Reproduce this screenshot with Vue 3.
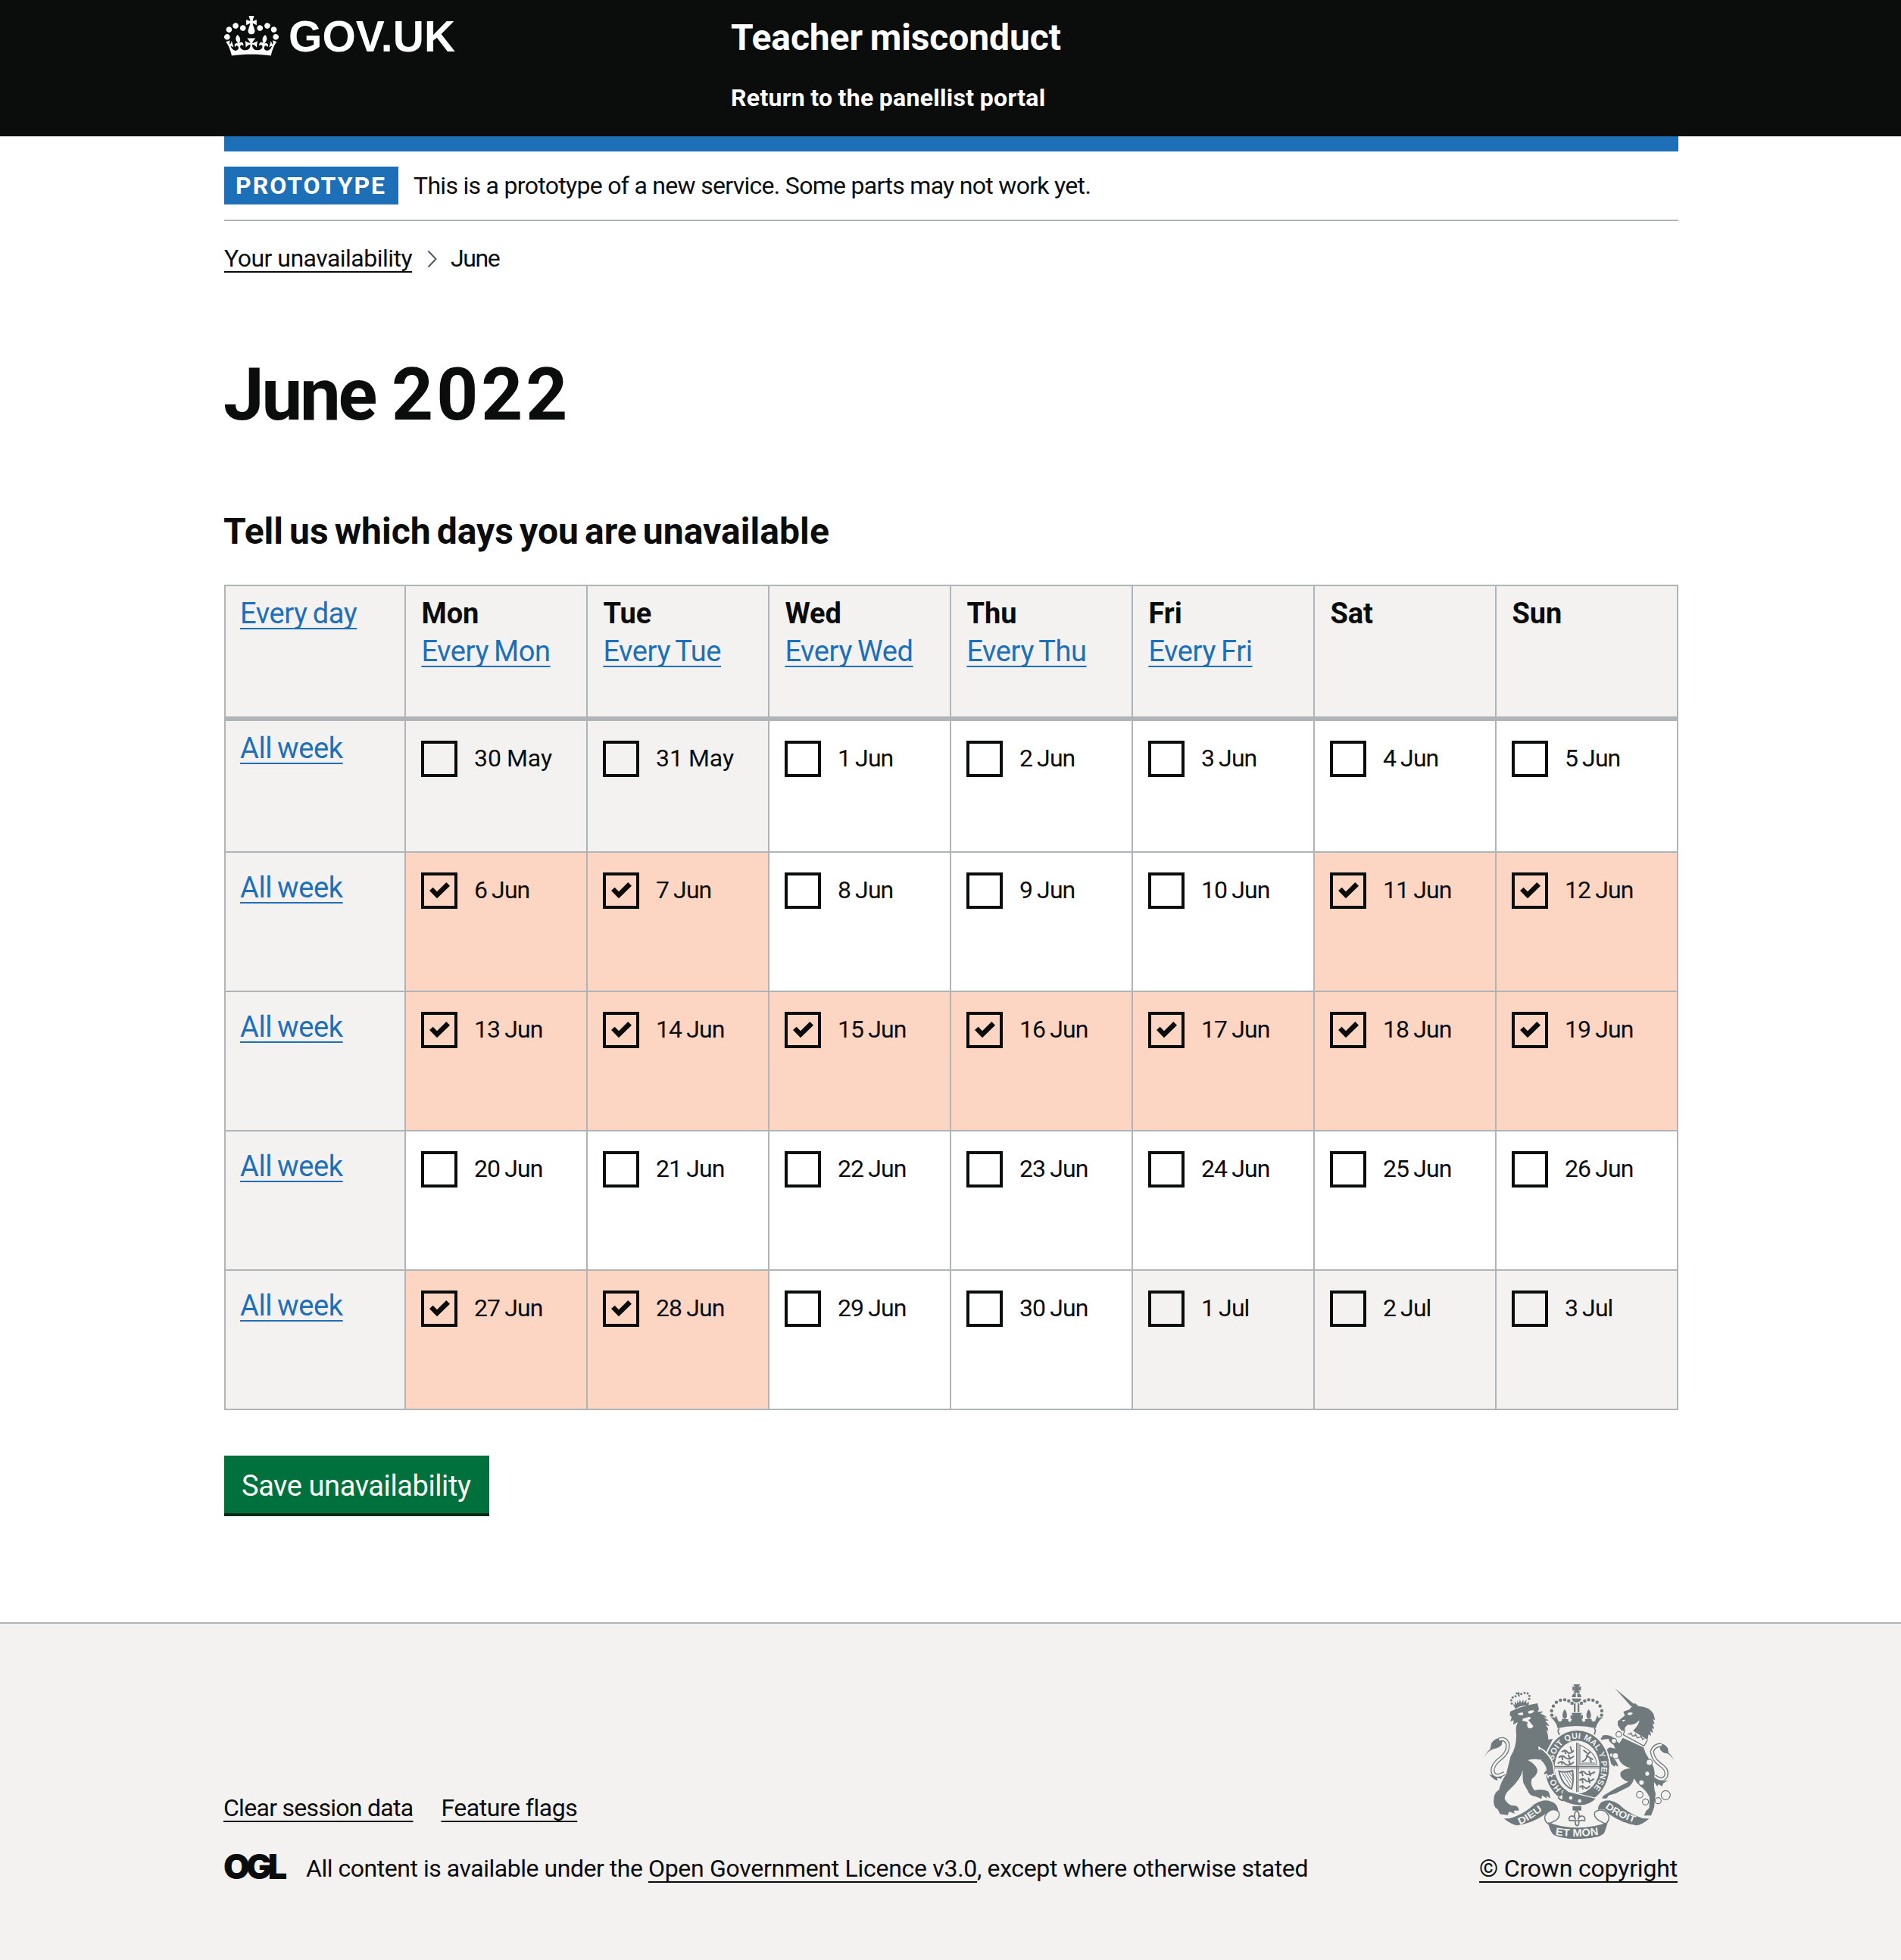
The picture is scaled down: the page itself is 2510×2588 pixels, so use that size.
<script setup>
const days = ['Mon', 'Tue', 'Wed', 'Thu', 'Fri', 'Sat', 'Sun']

const unavailable = new Set(['6 Jun', '7 Jun', '11 Jun', '12 Jun', '13 Jun', '14 Jun', '15 Jun', '16 Jun', '17 Jun', '18 Jun', '19 Jun', '27 Jun', '28 Jun'])

// Five Monday-to-Sunday weeks starting on 30 May 2022
const weeks = Array.from({ length: 5 }, (_, w) =>
  Array.from({ length: 7 }, (_, d) => {
    const n = w * 7 + d - 1
    const label = n < 1 ? `${n + 31} May` : n > 30 ? `${n - 30} Jul` : `${n} Jun`
    return { label, outside: n < 1 || n > 30, checked: unavailable.has(label), may: n < 1 }
  })
)

const crownDots = [[327, 194], [326, 177], [333, 158], [345, 143], [361, 135], [378, 133], [394, 138], [407, 147]]
const lionDots = [[168, 148], [166, 135], [172, 124], [183, 119], [206, 110], [219, 106], [231, 108], [238, 118], [237, 130]]
const chain = [[592, 270, 11], [573, 296, 10], [579, 355, 12], [713, 381, 12], [675, 509, 13], [698, 538, 12], [748, 533, 12], [778, 511, 18]]
const crownHalf = 'M322 202l18 2 3-10 7 17q2 9 9 9 9-1 8-12 6 3 11-1-9-2-9-10 0-16 9-26 9 10 9 26 0 8-9 10 8 4 14 2-2 10 6 12 8-2 7-14l-4 2v-16l9 4-5-12h21v52q-40 0-76 9-5-24-28-44z'
</script>

<template>
  <div class="page">
    <header class="header">
      <div class="width header-row">
        <a class="logo">
          <svg class="crown" viewBox="0 0 132 97" fill="currentColor" aria-hidden="true">
            <path fill-rule="evenodd" d="M25 30.2c3.5 1.5 7.7-.2 9.1-3.7 1.5-3.6-.2-7.8-3.9-9.2-3.6-1.4-7.6.3-9.1 3.9-1.4 3.5.3 7.5 3.9 9zM9 39.5c3.6 1.5 7.8-.2 9.2-3.7 1.5-3.6-.2-7.8-3.9-9.1-3.6-1.5-7.6.2-9.1 3.8-1.4 3.5.3 7.5 3.8 9zM4.4 57.2c3.5 1.5 7.7-.2 9.1-3.8 1.5-3.6-.2-7.7-3.9-9.1-3.5-1.5-7.6.3-9.1 3.8-1.4 3.5.3 7.6 3.9 9.1zm38.3-21.4c3.5 1.5 7.7-.2 9.1-3.8 1.5-3.6-.2-7.7-3.9-9.1-3.6-1.5-7.6.3-9.1 3.8-1.3 3.6.4 7.7 3.9 9.1zm64.4-5.6c-3.6 1.5-7.8-.2-9.1-3.7-1.5-3.6.2-7.8 3.8-9.2 3.6-1.4 7.7.3 9.2 3.9 1.3 3.5-.4 7.5-3.9 9zm15.9 9.3c-3.6 1.5-7.7-.2-9.1-3.7-1.5-3.6.2-7.8 3.7-9.1 3.6-1.5 7.7.2 9.2 3.8 1.5 3.5-.3 7.5-3.8 9zm4.7 17.7c-3.6 1.5-7.8-.2-9.2-3.8-1.5-3.6.2-7.7 3.9-9.1 3.6-1.5 7.7.3 9.2 3.8 1.3 3.5-.4 7.6-3.9 9.1zM89.3 35.8c-3.6 1.5-7.8-.2-9.2-3.8-1.4-3.6.2-7.7 3.9-9.1 3.6-1.5 7.7.3 9.2 3.8 1.4 3.6-.3 7.7-3.9 9.1zM69.7 17.7l8.9 4.7V9.3l-8.9 2.8c-.2-.3-.5-.6-.9-.9L72.4 0H59.6l3.5 11.2c-.3.3-.6.5-.9.9l-8.8-2.8v13.1l8.8-4.7c.3.3.6.7.9.9l-5 15.4v.1c-.2.8-.4 1.6-.4 2.4 0 4.1 3.1 7.5 7 8.1h.2c.3 0 .7.1 1 .1.4 0 .7 0 1-.1h.2c4-.6 7.1-4.1 7.1-8.1 0-.8-.1-1.7-.4-2.4V34l-5.1-15.4c.4-.2.7-.6 1-.9zM66 92.8c16.9 0 32.8 1.1 47.1 3.2 4-16.9 8.9-26.7 14-33.5l-9.6-3.4c1 4.9 1.1 7.2 0 10.2-1.5-1.4-3-4.3-4.2-8.7L108.6 76c2.8-2 5-3.2 7.5-3.3-4.4 9.4-10 11.9-13.6 11.2-4.3-.8-6.3-4.6-5.6-7.9 1-4.7 5.7-5.9 8-.5 4.3-8.7-3-11.4-7.6-8.8 7.1-7.2 7.9-13.5 2.1-21.1-8 6.1-8.1 12.3-4.5 20.8-4.7-5.4-12.1-2.5-9.5 6.2 3.4-5.2 7.9-2 7.2 3.1-.6 4.3-6.4 7.8-13.5 7.2-10.3-.9-10.9-8-11.2-13.8 2.5-.5 7.1 1.8 11 7.3L80.2 60c-4.1 4.4-8 5.3-12.3 5.4 1.4-4.4 8-11.6 8-11.6H55.5s6.4 7.2 7.9 11.6c-4.2-.1-8-1-12.3-5.4l1.4 16.4c3.9-5.5 8.5-7.7 10.9-7.3-.3 5.8-.9 12.8-11.1 13.8-7.2.6-12.9-2.9-13.5-7.2-.7-5 3.8-8.3 7.1-3.1 2.7-8.7-4.6-11.6-9.4-6.2 3.7-8.5 3.6-14.7-4.6-20.8-5.8 7.6-5 13.9 2.2 21.1-4.7-2.6-11.9.1-7.7 8.8 2.3-5.5 7.1-4.2 8.1.5.7 3.3-1.3 7.1-5.7 7.9-3.5.7-9-1.8-13.5-11.2 2.5.1 4.7 1.3 7.5 3.3l-4.7-15.4c-1.2 4.4-2.7 7.2-4.3 8.7-1.1-3-.9-5.3 0-10.2l-9.5 3.4c5 6.9 9.9 16.7 14 33.5 14.8-2.1 30.8-3.2 47.7-3.2z" />
          </svg>
          <span class="logo-text">GOV.UK</span>
        </a>
        <div class="service">
          <a class="service-name">Teacher misconduct</a>
          <a class="service-link">Return to the panellist portal</a>
        </div>
      </div>
    </header>

    <div class="width blue-bar"></div>

    <div class="width phase">
      <strong class="tag">PROTOTYPE</strong>
      <span class="phase-text">This is a prototype of a new service. Some parts may not work yet.</span>
    </div>

    <nav class="width crumbs">
      <a class="link crumb-link">Your unavailability</a>
      <svg class="chevron" viewBox="0 0 14 24" fill="none" stroke="#505a5f" stroke-width="2"><path d="M1.5 1.5 11.5 12 1.5 22.5" /></svg>
      <span class="crumb-current">June</span>
    </nav>

    <main class="width">
      <h1><span class="month">June</span> <span class="year">2022</span></h1>
      <h2>Tell us which days you are unavailable</h2>

      <div class="calendar">
        <div class="cell head side"><a class="link day-link">Every day</a></div>
        <div v-for="(day, i) in days" :key="day" class="cell head">
          <b>{{ day }}</b>
          <a v-if="i < 5" class="link day-link">Every {{ day }}</a>
        </div>
        <template v-for="(week, w) in weeks" :key="w">
          <div class="cell side" :class="{ first: w === 0 }"><a class="link week-link">All week</a></div>
          <label
            v-for="d in week"
            :key="d.label"
            class="cell day"
            :class="{ outside: d.outside, checked: d.checked, may: d.may }"
          >
            <span class="box">
              <svg v-if="d.checked" viewBox="0 0 48 48"><path d="M11 24l4.7-4.3 5.3 5.6L33.3 13l4.7 4.7-17 16.6z" fill="#0b0c0c" /></svg>
            </span>
            <span class="date">{{ d.label }}</span>
          </label>
        </template>
      </div>

      <button class="save">Save unavailability</button>
    </main>

    <footer class="footer">
      <div class="width footer-row">
        <div class="footer-left">
          <div class="footer-nav">
            <a class="link clear">Clear session data</a>
            <a class="link flags">Feature flags</a>
          </div>
          <div class="licence">
            <span class="ogl">OGL</span>
            <span class="licence-text"><span class="l1">All content is available under the </span><a class="link l2">Open Government Licence v3.0</a><span class="l3">, except where otherwise stated</span></span>
          </div>
        </div>

        <div class="copyright">
          <svg class="crest" viewBox="60 72 750 612" aria-hidden="true">
            <defs>
              <path id="garter-path" d="M365 487A96 113 0 0 1 331 400A96 113 0 0 1 523 400A96 113 0 0 1 475 498" />
              <path id="scroll-left" d="M200 628Q250 606 302 560" />
              <path id="scroll-mid" d="M341 669Q425 681 518 667" />
              <path id="scroll-right" d="M537 560Q590 602 668 624" />
            </defs>

            <g class="ink">
              <!-- royal crown -->
              <path d="M412 72h27l-7 12 10-5v19l-10-5 7 12h-27l7-12-10 5v-19l10 5z" />
              <path d="M406 123a19 19 0 0 1 16-17v17zM428 106a19 19 0 0 1 16 17h-16zM406 128h38q-4 15-19 16-15-1-19-16z" />
              <path d="M414 148h7v34h-7zM429 148h7v34h-7z" />
              <g v-for="(p, i) in crownDots" :key="i">
                <circle :cx="p[0]" :cy="p[1]" r="6.6" /><circle :cx="851 - p[0]" :cy="p[1]" r="6.6" />
              </g>
              <path :d="crownHalf" />
              <path :d="crownHalf" transform="matrix(-1 0 0 1 851 0)" />
              <path fill="none" stroke="#707a7c" stroke-width="5" d="M356 246q-9 12 2 26M495 246q9 12-2 26" />

              <!-- lion -->
              <circle v-for="(p, i) in lionDots" :key="i" :cx="p[0]" :cy="p[1]" r="4.5" />
              <path d="M172 150l9 4-2-15 9 11 3-14 5 12 4-16 6 14 8-15 1 14 12-12-2 15 12-6-3 14q-30-2-51 13zM186 103l6 3 2-5 3 5 6 1-5 4 3 10-7-1-2-8-8-1z" />
              <path d="M162 180Q207 158 270 147l6 24-6 10 22-2-10 10q18 4 25 15l-13-2q14 10 21 12l-15 4q13 8 16 20l-13-5q10 12 10 24l-8-6q8 20 8 40l18-3Q316 315 308 350L290 372Q262 364 232 372Q262 388 270 410Q270 432 248 446Q240 470 258 492Q290 484 312 496Q322 506 320 524L306 514L308 524L288 512L286 526L262 516Q236 512 232 494L214 462Q210 440 212 410Q206 446 160 488Q140 506 140 526Q150 546 168 552Q198 550 196 572L176 572L180 584L158 576L152 590L122 586L112 566L104 562Q94 548 97 528Q98 500 118 490Q124 460 146 428L164 356Q188 320 186 268Q182 240 192 222l-18 10 2-18-14 6 6-18-8-8z" />
              <path fill="none" stroke="#707a7c" stroke-width="16" d="M140 424q-40 24-48-8 0-28 34-52 30-24 26-56-8-24-34-17" />
              <path d="M60 360q8-20 22-30l6-26q18-24 46-20l-6 28q-12 14-30 15-28 10-38 33zM134 430l-8 16-16-4 2 12-14-6-20-18 18 2q16 6 38-2z" />

              <!-- unicorn -->
              <path d="M577 88l80 66-16 6z" />
              <path d="M634 172l22-26 14 12q44 2 60 32l6 24-8-4 6 20-9-3 8 22-9-4 4 20-11-7 3 18-10-6-4 22-58-36q24-22 26-42-20 22-46 18-15 12-15 26l-11-4-14-20 0-16 28-22-6-16z" />
              <path d="M608 284L690 322Q696 345 712 368Q738 400 734 440Q728 480 738 505L732 560L720 592L692 592L700 574L713 562L714 520Q700 490 678 476Q662 464 652 444Q650 462 632 478L580 504L552 512L544 524L526 524L530 514L552 500L580 484L630 458Q596 448 598 424Q606 406 640 404Q604 396 592 368L582 350L560 346L556 354Q586 372 590 398L578 392L574 398L562 388L556 366L534 354Q526 350 532 338L556 322L578 326L572 312Q552 300 552 288L532 290Q524 294 520 288L530 274Q556 270 574 286Q586 300 594 306Z" />
              <path fill="none" stroke="#707a7c" stroke-width="16" d="M734 436q32 26 46-2 6-26-24-44-30-22-32-52 8-26 36-26" />
              <path d="M810 374q-6-20-20-30l-4-20q-12-18-34-18l4 24q10 16 28 16 18 10 26 28zM720 440l24 36 6-8 14 8 4-12 20-12-24 4-18-12z" />
            </g>

            <g class="paper">
              <path fill="none" stroke="#f3f2f1" stroke-width="8" d="M142 423q-42 25-50-7 0-28 34-52 30-24 26-56-8-24-34-17" />
              <path fill="none" stroke="#f3f2f1" stroke-width="8" d="M734 436q32 26 46-2 6-26-24-44-30-22-32-52 8-26 38-26" />
              <path d="M190 190q10-8 22-6l2 8q-10 6-24-2zM232 180q12-8 26-4-6 12-22 12zM212 208l28-8 4 8-10 6 20 24q-6 14-22 6-6-14 0-22l-22-6z" />
              <path d="M628 186q10-6 20 0l-8 8-14-2zM604 214l16-2-10 8z" />
              <path d="M614 252l12 2 8 12 6-8 10 18 10-6 4 18 12-8 2 16 16-10 12 8-10 24-84-46z" />
            </g>
            <path fill="none" stroke="#707a7c" stroke-width="4" d="M617 250l-7 22 82 44 14-24M628 268l8 2 4-6 6 12 10 0 2-6 8 14 10-2 4-6 6 14 8-4" />
            <g v-for="(c, i) in chain" :key="i">
              <circle :cx="c[0]" :cy="c[1]" :r="c[2]" fill="#f3f2f1" stroke="#707a7c" stroke-width="3.5" />
            </g>
            <circle cx="705" cy="426" r="8" fill="#f3f2f1" /><circle cx="682" cy="461" r="9" fill="#f3f2f1" />

            <!-- garter -->
            <ellipse cx="427" cy="400" rx="133" ry="150" fill="#f3f2f1" />
            <ellipse cx="427" cy="400" rx="127" ry="145" fill="#707a7c" />
            <ellipse cx="427" cy="400" rx="89" ry="105" fill="#f3f2f1" />
            <path class="paper" d="M352 520l30 44h90l10-28-20-14-80-20z" />
            <path class="ink" stroke="#f3f2f1" stroke-width="4" d="M368 490q70 18 136 34-30 32-76 28-34-4-62-20z" />
            <path fill="none" stroke="#707a7c" stroke-width="6" d="M364 488q20 0 26 16l-20 28q-12-2-18-12M364 488q-12 12 6 22" />
            <circle cx="402" cy="522" r="7" fill="#f3f2f1" /><circle cx="437" cy="534" r="7" fill="#f3f2f1" />

            <text class="motto" font-size="33" letter-spacing="0.9"><textPath href="#garter-path">HO&#160;&#160;&#160;&#160;&#160;&#160;&#160;SOIT QUI MAL Y PENSE</textPath></text>

            <path class="ink" stroke="#f3f2f1" stroke-width="5" d="M276 322Q318 344 332 388L338 428Q328 426 326 436Q318 428 312 440L306 428L294 432Q292 418 304 412Q302 392 282 374Z" />
            <path class="ink" d="M270 330l16 4 6 36-22 0z" />

            <!-- quartered shield -->
            <path fill="none" stroke="#707a7c" stroke-width="4" d="M425 303v196M431 303v196M339 397h178M339 403h178" />
            <g fill="none" stroke="#707a7c" stroke-width="6">
              <path d="M366 340q14-12 22 0t26-6M376 332l6 16M400 318l8 26M354 362q14-12 26 0t34-6M366 354l4 18M392 350l8 20M350 386q16-14 28 0t36-6M364 376l4 14M394 374l6 16" />
              <path d="M436 424q14-12 24 0t38-6M444 414l6 22M474 414l6 22M436 452q14-12 24 0t34-6M446 444l4 20M472 442l6 22M436 480q12-10 20 0t22-6M446 472l4 16" />
              <path d="M446 378q18-4 20-24l14-16M466 356l24 14M452 332l16 14M478 368l6 14" />
            </g>
            <path fill="none" stroke="#707a7c" stroke-width="3.5" d="M438 312v78h66q2-46-66-78zM444 384h54" />
            <path fill="none" stroke="#707a7c" stroke-width="6" d="M355 416q30 6 54-2 6 40-4 72-38-16-50-70z" />
            <path fill="none" stroke="#707a7c" stroke-width="3" d="M366 420l34 56M376 420l28 44M386 420l20 32M396 418l10 18" />

            <!-- scroll and motto -->
            <path class="ink" stroke="#f3f2f1" stroke-width="3" d="M134 603q30 2 56-12 40-18 66-44 40-28 74-10 24 12 24 40-18-12-38-2l-20 16q-50 34-106 41-20 0-56-29zM716 603q-30 2-56-12-40-18-66-44-40-28-70-10-16 12-16 34 12-6 28 0l20 18q52 36 106 43 20 0 54-29z" />
            <path fill="#f3f2f1" stroke="#707a7c" stroke-width="4.5" d="M320 572q-20 12-21 28-1 14 14 25l30-14q18-14 12-32-14-16-35-7zM532 572q20 12 21 28 1 14-14 25l-26-14q-22-14-16-32 14-14 35-7z" />
            <path class="ink" d="M312 618q54 22 116 22 66 0 120-22-4 20-10 34-4 16-24 22-42 11-86 10-48 1-86-12-16-6-22-26-6-14-8-28z" />
            <path class="ink" d="M409 555h35v17h-35z" />
            <path fill="none" stroke="#707a7c" stroke-width="5" d="M426 572q-16 14-5 36-5-16-18-14-12 6-6 18 14-2 22 0l2 16 6 5 6-5 2-16q10-2 22 0 4-14-8-18-14-2-18 14 10-22-5-36zM414 612h24" />
            <g class="motto">
              <text font-size="38" textLength="108" lengthAdjust="spacingAndGlyphs"><textPath href="#scroll-left">DIEU</textPath></text>
              <text font-size="42" textLength="172" lengthAdjust="spacingAndGlyphs"><textPath href="#scroll-mid">ET MON</textPath></text>
              <text font-size="38" textLength="132" lengthAdjust="spacingAndGlyphs"><textPath href="#scroll-right">DROIT</textPath></text>
            </g>
          </svg>
          <a class="link copy">© Crown copyright</a>
        </div>
      </div>
    </footer>
  </div>
</template>

<style>
body {
  margin: 0;
  background: #fff;
}
</style>

<style scoped>
.page {
  min-height: 2588px;
  display: flex;
  flex-direction: column;
  font-family: Roboto, "Liberation Sans", sans-serif;
  font-size: 32px;
  line-height: 50px;
  color: #0b0c0c;
}
.width {
  width: 1920px;
  margin-left: 296px;
  box-sizing: border-box;
  white-space: nowrap;
}
.link {
  text-decoration: underline;
  text-decoration-thickness: 2px;
  text-underline-offset: 6px;
  text-decoration-skip-ink: none;
}

.header {
  height: 180px;
  background: #0b0c0c;
  color: #fff;
}
.header-row {
  display: flex;
}
.logo {
  display: flex;
  width: 669px;
  padding-top: 21px;
  align-items: flex-start;
}
.crown {
  width: 72px;
  height: 53px;
}
.logo-text {
  margin: -3px 0 0 13px;
  font: 700 57px/60px "Liberation Sans", Arial, sans-serif;
  letter-spacing: 0.1px;
}
.service {
  display: flex;
  flex-direction: column;
  gap: 29px;
  padding-top: 25px;
  font-weight: 700;
}
.service-name {
  font-size: 48px;
  letter-spacing: -0.1px;
  word-spacing: -2px;
}
.service-link {
  letter-spacing: 0.3px;
  word-spacing: -1px;
}

.blue-bar {
  height: 20px;
  background: #1d70b8;
}
.phase {
  display: flex;
  gap: 20px;
  padding: 20px 0;
  border-bottom: 2px solid #b1b4b6;
}
.tag {
  width: 230px;
  box-sizing: border-box;
  padding-left: 15px;
  background: #1d70b8;
  color: #fff;
  letter-spacing: 2px;
}
.phase-text {
  letter-spacing: -0.7px;
}
.crumbs {
  display: flex;
  align-items: center;
  margin-top: 24px;
}
.crumb-link {
  letter-spacing: -0.52px;
}
.chevron {
  width: 14px;
  height: 24px;
  margin: 2px 17px 0 20px;
}
.crumb-current {
  letter-spacing: -1.4px;
}

h1 {
  margin: 105px 0 0 -1px;
  font-size: 96px;
  line-height: 100px;
}
.month {
  letter-spacing: -3.2px;
}
.year {
  margin-left: -2px;
  letter-spacing: 4px;
}
h2 {
  margin: 106px 0 45px -1px;
  font-size: 48px;
  line-height: 50px;
  letter-spacing: 0.05px;
  word-spacing: -4px;
}

.calendar {
  display: grid;
  grid-template-columns: 238px repeat(7, 240px);
  grid-template-rows: 178px 174px repeat(4, 184px);
  border-top: 2px solid #b1b4b6;
  border-left: 2px solid #b1b4b6;
  font-size: 38px;
}
.cell {
  border-right: 2px solid #b1b4b6;
  border-bottom: 2px solid #b1b4b6;
}
.head {
  display: flex;
  flex-direction: column;
  align-items: flex-start;
  padding: 11px 0 0 20.4px;
  border-bottom-width: 6px;
  background: #f3f2f1;
}
.side {
  padding: 21px 0 0 19px;
  background: #f3f2f1;
}
.side.head,
.side.first {
  padding-top: 11px;
}
.day-link,
.week-link {
  color: #1d70b8;
  letter-spacing: -0.4px;
  word-spacing: -2px;
  text-underline-offset: 5.6px;
}
.day {
  display: flex;
  align-items: flex-start;
  gap: 22px;
  padding: 26px 0 0 20px;
  font-size: 32px;
}
.outside {
  background: #f3f2f1;
}
.checked {
  background: #fcd6c3;
}
.box {
  flex: none;
  width: 48px;
  height: 48px;
  box-sizing: border-box;
  border: 4px solid #0b0c0c;
}
.box svg {
  display: block;
  width: 48px;
  height: 48px;
  margin: -4px;
}
.date {
  margin-top: -2px;
  letter-spacing: -0.9px;
  word-spacing: -1px;
}
.may .date {
  letter-spacing: 0;
}
.save {
  display: block;
  width: 350px;
  height: 76px;
  margin-top: 60px;
  padding: 3px 0 0 23px;
  border: 0;
  background: #00703c;
  box-shadow: 0 4px 0 #002d18;
  color: #fff;
  font: 38px/74px Roboto, "Liberation Sans", sans-serif;
  letter-spacing: -0.42px;
  text-align: left;
}

.footer {
  flex: 1;
  margin-top: 144px;
  border-top: 2px solid #b1b4b6;
  background: #f3f2f1;
}
.footer-row {
  display: flex;
  justify-content: space-between;
  align-items: flex-end;
  padding-top: 80px;
}
.footer-left {
  display: flex;
  flex-direction: column;
  gap: 30px;
}
.footer-nav {
  display: flex;
  gap: 37px;
  margin-left: -1px;
}
.clear {
  letter-spacing: -0.71px;
}
.flags {
  letter-spacing: -0.49px;
}
.licence {
  display: flex;
}
.ogl {
  width: 109px;
  margin-left: -1px;
  font: 900 45px/45px Inter, "Liberation Sans", sans-serif;
  letter-spacing: -5px;
}
.l1 {
  white-space: pre;
  letter-spacing: -0.47px;
}
.l2 {
  letter-spacing: -0.29px;
}
.l3 {
  letter-spacing: -0.37px;
}
.copyright {
  display: flex;
  flex-direction: column;
  align-items: flex-end;
  gap: 14px;
}
.copy {
  margin-right: 1px;
  letter-spacing: -0.18px;
}
.crest {
  width: 250px;
  height: 204px;
  margin-right: 6px;
}
.ink {
  fill: #707a7c;
}
.paper {
  fill: #f3f2f1;
}
.motto {
  fill: #f3f2f1;
  font-family: "Liberation Sans", sans-serif;
  font-weight: 700;
}
</style>
